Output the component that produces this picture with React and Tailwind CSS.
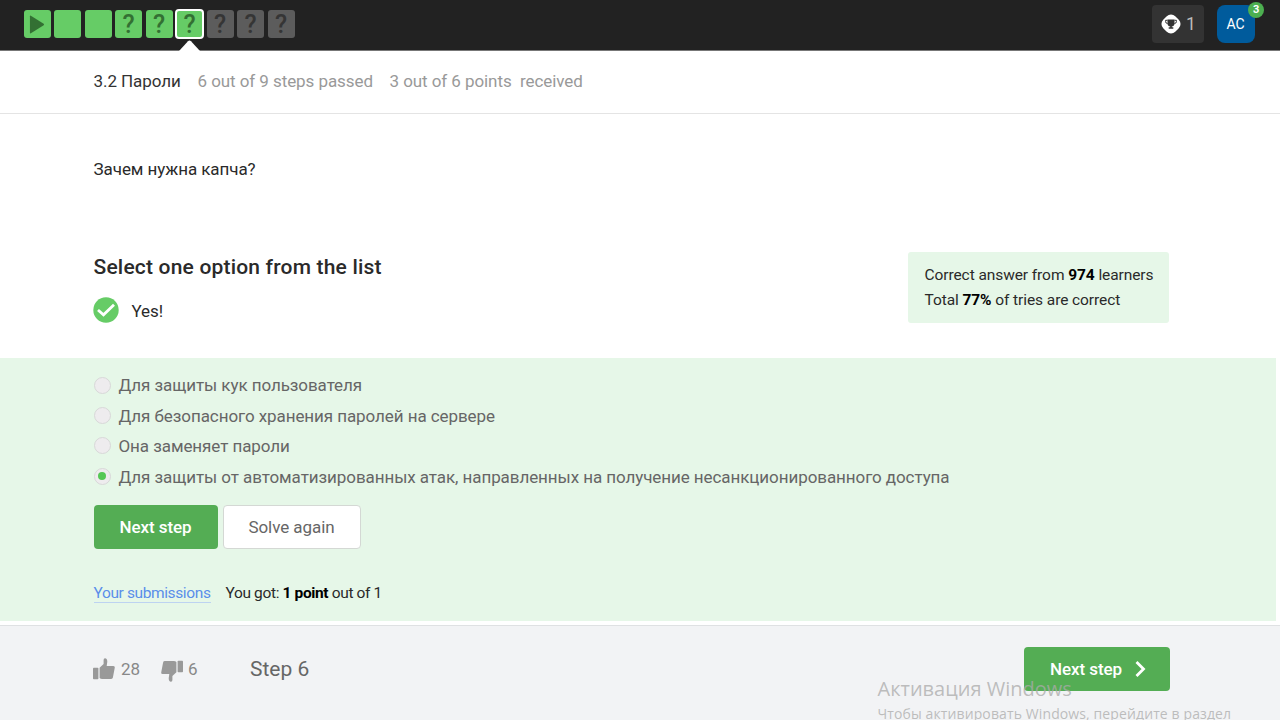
import React from "react";

const STEPS = ["play", "blank", "blank", "quiz", "quiz", "current", "todo", "todo", "todo"];

const OPTIONS = [
  { text: "Для защиты кук пользователя" },
  { text: "Для безопасного хранения паролей на сервере" },
  { text: "Она заменяет пароли" },
  {
    text: "Для защиты от автоматизированных атак, направленных на получение несанкционированного доступа",
    checked: true,
  },
];

const TILE = {
  play: "bg-[#66cc66]",
  blank: "bg-[#66cc66]",
  quiz: "bg-[#66cc66] text-[#337033]",
  current: "bg-[#66cc66] text-[#337033]",
  todo: "bg-[#5c5c5c] text-[#353535]",
};

function StepTile({ kind }) {
  return (
    <div className={`relative flex h-[28px] w-[27px] items-center justify-center rounded-[3px] ${TILE[kind]}`}>
      {kind === "play" && (
        <svg className="-ml-[1px]" width="16" height="19" viewBox="0 0 17 20" fill="#337033">
          <path d="M1 1.2Q1 .2 2 .7L15.6 9.3Q16.4 10 15.6 10.7L2 19.3Q1 19.8 1 18.8Z" />
        </svg>
      )}
      {(kind === "quiz" || kind === "current" || kind === "todo") && (
        <span className="pt-[2px] text-[25px] leading-[28px] font-medium">?</span>
      )}
      {kind === "current" && (
        <>
          <span className="absolute -inset-x-[1px] -top-[1px] -bottom-[1px] rounded-[4px] border-2 border-white" />
          <svg className="absolute top-[30px] left-[3px]" width="21" height="11" viewBox="0 0 21 11" fill="#fff">
            <path d="M0 11L9 1.2Q10.5 0 12 1.2L21 11Z" />
          </svg>
        </>
      )}
    </div>
  );
}

function Thumb({ className }) {
  return (
    <svg className={className} width="22" height="22" viewBox="0 0 22 22" fill="#999">
      <path d="M0.8 9.8H4.6Q5.4 9.8 5.4 10.5V20.4Q5.4 21.2 4.6 21.2H.8Q0 21.2 0 20.4V10.5Q0 9.8 .8 9.8Z" />
      <path d="M6.6 9.8L10.6 6V2Q10.6.3 12 .3Q14.3.4 14.3 3.8L13.7 8H20.4Q22 8 21.8 9.5L19.9 19.6Q19.6 21 18.2 21H9.2Q7.6 21 6.6 20Z" />
    </svg>
  );
}

export default function App() {
  return (
    <div className="relative flex h-[720px] w-[1280px] flex-col overflow-hidden bg-white font-['Roboto','Noto_Sans',sans-serif] text-[#2a2a2a]">
      <header className="flex h-[51px] shrink-0 justify-between border-b border-[#777] bg-[#222] pl-[23.5px] pr-[25px]">
        <div className="flex gap-[3.5px] pt-[10px]">
          {STEPS.map((kind, i) => (
            <StepTile key={i} kind={kind} />
          ))}
        </div>
        <div className="flex gap-[13px] pt-[5px]">
          <div className="flex h-[38px] w-[52px] items-center gap-[4px] rounded-[4px] bg-[#333] pl-[8px] text-[17.5px] text-[#bbb]">
            <svg width="22" height="22" viewBox="0 0 22 22">
              <rect x="2.5" y="2.5" width="17" height="17" rx="6" fill="#fff" transform="rotate(45 11 11)" />
              <path d="M7.5 6.5h7v4q0 2.7-2.7 3v.8h1.5v1.4h-4.6v-1.4h1.5v-.8q-2.7-.3-2.7-3z" fill="#333" />
              <path d="M7.5 7.3H5.6v1.2q0 2 2 2M14.5 7.3h1.9v1.2q0 2-2 2" fill="none" stroke="#333" />
            </svg>
            <span>1</span>
          </div>
          <div className="relative flex h-[38px] w-[38px] items-center justify-center rounded-[8px] bg-[#005b9c] pt-[1px] pr-[1px] text-[14px] tracking-[-0.1px] text-white">
            АС
            <span className="absolute -top-[3px] left-[31px] flex h-[16px] w-[16px] items-center justify-center rounded-full bg-[#4caf50] pt-[1px] text-[11px] font-bold text-white">
              3
            </span>
          </div>
        </div>
      </header>

      <div className="flex h-[63px] shrink-0 items-center border-b border-[#e4e4e4] pl-[93.5px] text-[17px] tracking-[-0.07px] text-[#999]">
        <span className="w-[104px] text-[#333]">3.2 Пароли</span>
        <span className="w-[192px]">6 out of 9 steps passed</span>
        <span className="w-[130.5px]">3 out of 6 points</span>
        <span>received</span>
      </div>

      <main className="flex h-[244px] shrink-0 justify-between pl-[93.5px] pr-[111px]">
        <div>
          <p className="mt-[42px] text-[17px] leading-[26px] tracking-[-0.07px]">Зачем нужна капча?</p>
          <h2 className="mt-[70px] text-[21px] leading-[30px] font-medium tracking-[0.19px]">
            Select one option from the list
          </h2>
          <div className="mt-[14px] -ml-[0.5px] flex items-center gap-[12.5px] text-[17px]">
            <svg width="26" height="26" viewBox="0 0 26 26">
              <circle cx="13" cy="13" r="12.7" fill="#66cc66" />
              <path d="M5 13L10.5 17.8L21 7.8" fill="none" stroke="#fff" strokeWidth="2.8" />
            </svg>
            <span className="mt-[3px] tracking-[-0.1px]">Yes!</span>
          </div>
        </div>
        <aside className="mt-[138px] h-[71px] w-[261px] rounded-[3px] bg-[#e6f7e8] pt-[11px] pl-[16.5px] text-[15.5px] leading-[25px] tracking-[-0.08px] whitespace-nowrap">
          <p>
            Correct answer from <b className="text-black">974</b> learners
          </p>
          <p>
            Total <b className="text-black">77%</b> of tries are correct
          </p>
        </aside>
      </main>

      <section className="h-[263px] w-[1276px] shrink-0 bg-[#e6f7e8] pt-[13px] pl-[93px]">
        <div>
          {OPTIONS.map((o) => (
            <label key={o.text} className="flex h-[30.4px] items-center text-[#666]">
              <span className="mr-[8px] ml-[0.5px] mb-[2px] flex h-[17px] w-[17px] shrink-0 items-center justify-center rounded-full border border-[#d8d8d8] bg-[#eeecee]">
                {o.checked && <span className="h-[8px] w-[8px] rounded-full bg-[#55c755]" />}
              </span>
              <span className="text-[17px] tracking-[-0.075px] whitespace-nowrap">{o.text}</span>
            </label>
          ))}
        </div>
        <div className="mt-[12.4px] flex gap-[5px] pl-[0.5px] text-[17px] tracking-[-0.07px]">
          <button className="h-[44px] w-[124px] rounded-[4px] bg-[#54ad54] pt-[1px] font-medium text-white">
            Next step
          </button>
          <button className="h-[44px] w-[138px] rounded-[4px] border border-[#d4d8d4] bg-white pt-[1px] text-[#666]">
            Solve again
          </button>
        </div>
        <div className="mt-[35px] flex items-start pl-[0.5px] text-[15.5px] leading-[18px] tracking-[-0.36px]">
          <a className="mr-[15px] border-b border-[#bdd3f1] tracking-[-0.38px] text-[#5a8eea]">Your submissions</a>
          <p>
            You got: <b className="text-black">1 point</b> out of 1
          </p>
        </div>
      </section>

      <footer className="mt-[4px] flex h-[95px] shrink-0 justify-between border-t border-[#dfe1e3] bg-[#f2f3f5] pr-[110.5px] pl-[93px]">
        <div className="flex h-[87px] items-center text-[17px] text-[#888]">
          <Thumb className="mr-[6px] -mt-[2px]" />
          <span className="w-[40px]">28</span>
          <Thumb className="mr-[5px] mt-[3px] rotate-180" />
          <span className="w-[62px]">6</span>
          <span className="text-[21px] text-[#666]">Step 6</span>
        </div>
        <button className="mt-[21px] flex h-[44px] w-[146px] items-center rounded-[4px] bg-[#54ad54] pl-[26.5px] text-[17px] font-medium tracking-[-0.07px] text-white">
          <span className="w-[85px] pt-[1px] text-left">Next step</span>
          <svg width="11" height="16" viewBox="0 0 11 16" fill="none" stroke="#fff" strokeWidth="2.8">
            <path d="M1.5 1L8.5 8L1.5 15" />
          </svg>
        </button>
      </footer>

      <div className="absolute top-[675px] left-[877.5px] font-['Open_Sans','Noto_Sans',sans-serif] whitespace-nowrap text-[#aaaaaa]/75">
        <p className="text-[20px] leading-[27px]">Активация Windows</p>
        <p className="text-[14px] leading-[24px] tracking-[0.11px]">Чтобы активировать Windows, перейдите в раздел</p>
      </div>
    </div>
  );
}
